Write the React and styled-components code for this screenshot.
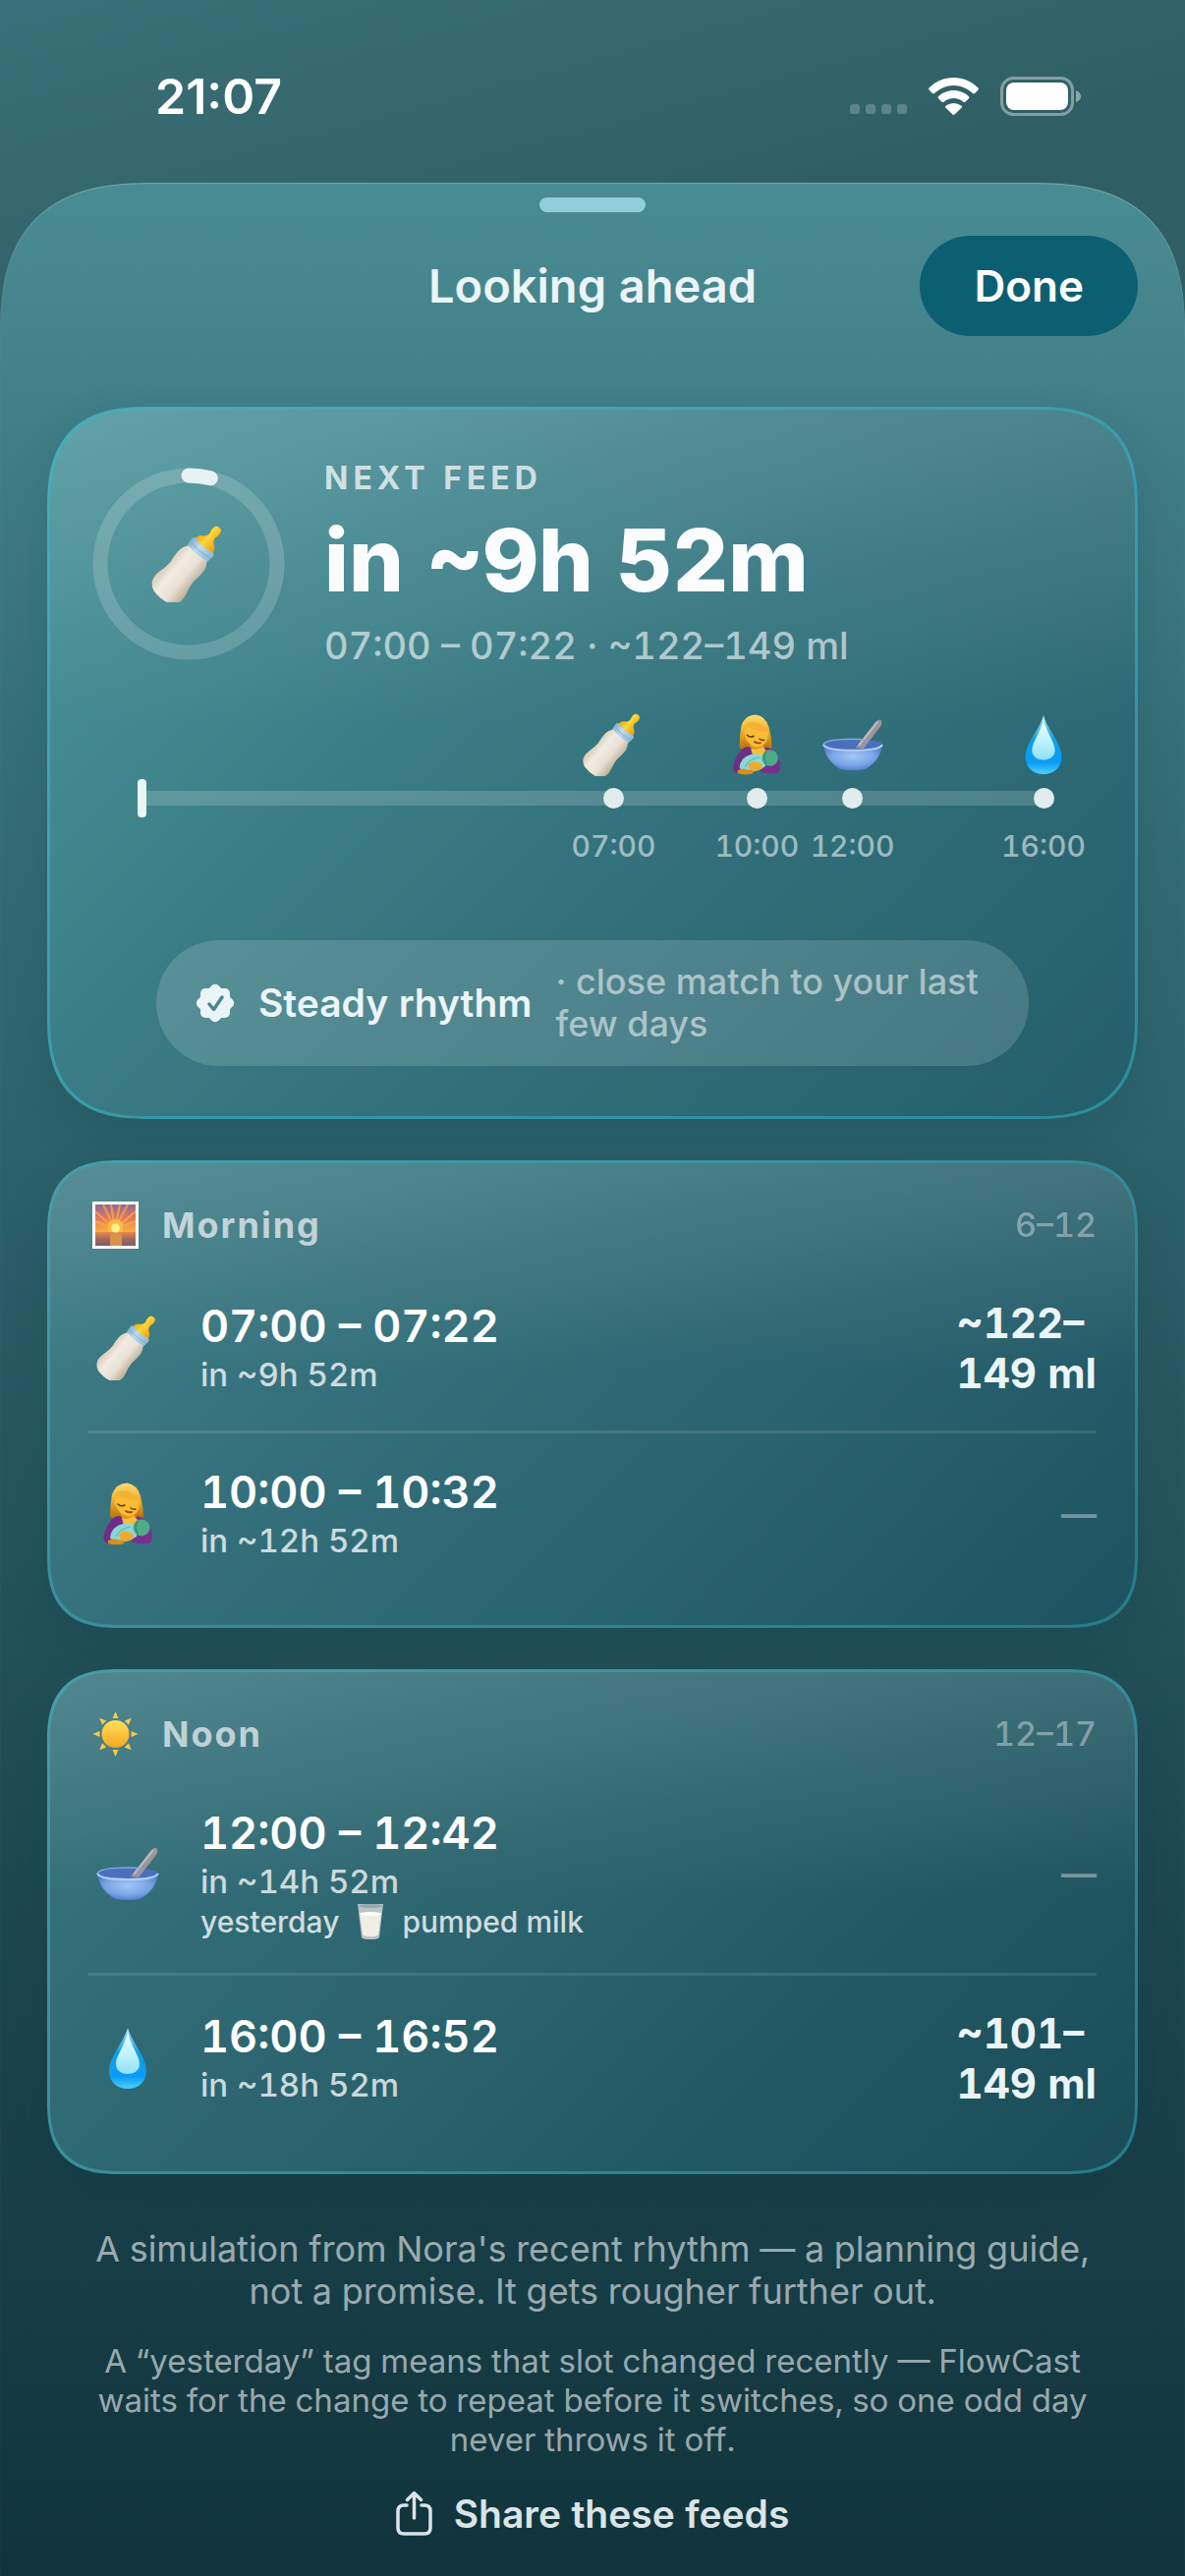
import React from "react";
import styled, { createGlobalStyle } from "styled-components";

const GlobalStyle = createGlobalStyle`
    * {
        box-sizing: border-box;
    }

    body {
        margin: 0;
        background: #11343c;
        color: #fff;
        font-family: Inter, "Liberation Sans", sans-serif;
        font-variant-numeric: tabular-nums;
    }

    h1, h2, p, ul {
        margin: 0;
        padding: 0;
    }

    svg {
        display: block;
        flex-shrink: 0;
    }
`

const Page = styled.div`
    min-height: 100vh;
    display: flex;
    flex-direction: column;
    background: linear-gradient(165deg, #3b7078 0, #2f5f65 400px);
`

const StatusBar = styled.div`
    height: 186px;
    padding: 10px 106px 0 158px;
    display: flex;
    align-items: center;
    justify-content: space-between;
`

const Clock = styled.time`
    font-size: 50px;
    line-height: 60px;
    font-weight: 600;
    font-variant-numeric: normal;
`

const StatusIcons = styled.div`
    display: flex;
    align-items: center;
    gap: 22px;
`

const Sheet = styled.main`
    flex: 1;
    border-radius: 126px 126px 0 0;
    padding: 15px 48px 24px;
    display: flex;
    flex-direction: column;
    background: linear-gradient(180deg, #498c93 0, #42808a 210px, #35707a 560px, #2d626b 960px, #225058 1490px, #183f48 2040px, #11343c 2436px);
    box-shadow: inset 0 1px 1px rgba(255, 255, 255, .25);

    @supports (corner-shape: squircle) {
        border-radius: 158px 158px 0 0;
        corner-shape: superellipse(1.4);
    }
`

const Grabber = styled.div`
    width: 108px;
    height: 15px;
    border-radius: 8px;
    background: #8fcfdb;
    align-self: center;
`

const Header = styled.header`
    margin-top: 24px;
    margin-bottom: 72px;
    display: grid;
    grid-template-columns: 1fr auto 1fr;
    align-items: center;
`

const Title = styled.h1`
    grid-column: 2;
    font-size: 47px;
    line-height: 60px;
    font-weight: 600;
    color: #ebf4f7;
`

const DoneButton = styled.button`
    justify-self: end;
    height: 102px;
    padding: 0 55px;
    border: 0;
    border-radius: 51px;
    background: #0c5f71;
    color: #fff;
    font: inherit;
    font-size: 44px;
    font-weight: 600;
`

const Hero = styled.section`
    border: 3px solid transparent;
    border-radius: 84px;
    padding: 50px 43px 51px;
    background:
        linear-gradient(180deg, rgba(255, 255, 255, .13) 0, rgba(255, 255, 255, 0) 45%) padding-box,
        linear-gradient(135deg, #4c959c 0, #35757f 50%, #235e6a 100%) padding-box,
        linear-gradient(150deg, #47aebb, #2b8c9a) border-box;
    box-shadow: 0 18px 48px rgba(6, 40, 50, .14);

    @supports (corner-shape: squircle) {
        border-radius: 105px;
        corner-shape: superellipse(1.4);
    }
`

const HeroTop = styled.div`
    display: flex;
    align-items: center;
    gap: 40px;
`

const RingBox = styled.div`
    display: grid;
    place-items: center;

    > svg {
        grid-area: 1 / 1;
    }
`

const HeroText = styled.div`
    display: flex;
    flex-direction: column;
    gap: 15px;
`

const Eyebrow = styled.h2`
    font-size: 32px;
    line-height: 40px;
    font-weight: 700;
    letter-spacing: 5px;
    text-transform: uppercase;
    color: rgba(255, 255, 255, .73);
`

const Countdown = styled.p`
    font-size: 88px;
    line-height: 96px;
    font-weight: 800;
    color: #fafcfd;
`

const HeroWindow = styled.p`
    font-size: 38px;
    line-height: 48px;
    font-weight: 500;
    color: rgba(255, 255, 255, .6);
`

const Timeline = styled.ul`
    position: relative;
    list-style: none;
    height: 156px;
    margin: 45px 50px 75px;
    display: flex;
    align-items: center;

    &::before {
        content: "";
        flex: 1;
        height: 15px;
        margin-top: 17px;
        background: rgba(255, 255, 255, .17);
    }
`

const NowTick = styled.li`
    position: absolute;
    left: -4px;
    top: 67px;
    width: 9px;
    height: 39px;
    border-radius: 4px;
    background: #ebf5f8;
`

const Stop = styled.li`
    position: absolute;
    top: 0;
    width: 100px;
    margin-left: -50px;
    display: flex;
    flex-direction: column;
    align-items: center;
`

const StopDot = styled.span`
    width: 21px;
    height: 21px;
    margin: 12px 0 20px;
    border-radius: 50%;
    background: #e1ecef;
`

const StopTime = styled.span`
    font-size: 30px;
    line-height: 36px;
    font-weight: 500;
    color: rgba(255, 255, 255, .55);
`

const RhythmPill = styled.div`
    margin: 0 65px;
    padding: 21px 40px;
    border-radius: 64px;
    background: rgba(255, 255, 255, .15);
    display: flex;
    align-items: center;
    gap: 24px;
`

const RhythmName = styled.strong`
    font-size: 39px;
    line-height: 48px;
    font-weight: 600;
    white-space: nowrap;
    color: #ebf5f8;
`

const RhythmNote = styled.span`
    font-size: 36px;
    line-height: 43px;
    font-weight: 500;
    color: rgba(255, 255, 255, .53);
`

const Card = styled.section`
    margin-top: 42px;
    border: 3px solid transparent;
    border-radius: 60px;
    padding: 39px 39px 31px;
    background:
        linear-gradient(180deg, rgba(255, 255, 255, .12) 0, rgba(255, 255, 255, 0) 45%) padding-box,
        linear-gradient(135deg, ${props => props.$from} 0, ${props => props.$to} 100%) padding-box,
        linear-gradient(150deg, #479eab, #257b8a) border-box;
    box-shadow: 0 18px 48px rgba(6, 40, 50, .14);

    @supports (corner-shape: squircle) {
        border-radius: 75px;
        corner-shape: superellipse(1.4);
    }
`

const CardHead = styled.div`
    height: 48px;
    margin-bottom: 17px;
    padding-left: 4px;
    display: flex;
    align-items: center;
    gap: 24px;
`

const CardTitle = styled.h2`
    flex: 1;
    font-size: 36px;
    line-height: 44px;
    font-weight: 700;
    letter-spacing: 2px;
    color: rgba(255, 255, 255, .67);
`

const CardHours = styled.span`
    font-size: 34px;
    line-height: 44px;
    font-weight: 500;
    color: rgba(255, 255, 255, .38);
`

const FeedList = styled.ul`
    list-style: none;
`

const Feed = styled.li`
    padding: 33px 0;
    display: flex;
    align-items: center;
    gap: 35px;

    & + & {
        border-top: 3px solid rgba(255, 255, 255, .11);
    }
`

const FeedIcon = styled.div`
    width: 79px;
    display: flex;
    justify-content: center;
`

const FeedBody = styled.div`
    flex: 1;
`

const FeedTime = styled.p`
    font-size: 45px;
    line-height: 54px;
    font-weight: 600;
`

const FeedIn = styled.p`
    font-size: 33px;
    line-height: 44px;
    font-weight: 500;
    color: rgba(255, 255, 255, .76);
`

const FeedTag = styled.p`
    display: flex;
    align-items: center;
    gap: 10px;
    font-size: 30px;
    line-height: 38px;
    font-weight: 500;
    color: rgba(255, 255, 255, .78);
`

const Amount = styled.p`
    width: min-content;
    font-size: 42px;
    line-height: 51px;
    font-weight: 700;
    color: #ebf4f6;
`

const NoAmount = styled(Amount)`
    font-size: 36px;
    font-weight: 600;
    color: rgba(255, 255, 255, .4);
`

const Footer = styled.footer`
    padding: 55px 40px 0;
    display: flex;
    flex-direction: column;
    align-items: center;
    text-align: center;
    color: rgba(255, 255, 255, .58);
`

const Disclaimer = styled.p`
    font-size: 36px;
    line-height: 43px;
`

const Footnote = styled.p`
    margin-top: 29px;
    font-size: 33px;
    line-height: 40px;
`

const ShareButton = styled.button`
    margin-top: 16px;
    height: 78px;
    padding: 0 24px;
    border: 0;
    background: none;
    color: #dbe4e6;
    font: inherit;
    font-size: 39px;
    font-weight: 600;
    display: flex;
    align-items: center;
    gap: 22px;
`

/* ---- pictograms ---- */

const Bottle = ({ size }) => (
    <svg width={size} height={size} viewBox="0 0 66 66" aria-hidden="true">
        <defs>
            <linearGradient id="milk" x1="0" y1="0" x2="1" y2="0">
                <stop offset="0" stopColor="#d8cbb8" />
                <stop offset=".3" stopColor="#f1ebe1" />
                <stop offset=".65" stopColor="#e9e1d4" />
                <stop offset="1" stopColor="#bdae98" />
            </linearGradient>
            <linearGradient id="teat" x1="0" y1="0" x2="1" y2="0">
                <stop offset="0" stopColor="#f0a30c" />
                <stop offset=".4" stopColor="#ffd63a" />
                <stop offset="1" stopColor="#e99a08" />
            </linearGradient>
            <linearGradient id="collar" x1="0" y1="0" x2="1" y2="0">
                <stop offset="0" stopColor="#7fb0d0" />
                <stop offset=".4" stopColor="#bcdcf0" />
                <stop offset="1" stopColor="#8bb8d4" />
            </linearGradient>
        </defs>
        <g transform="translate(33 33) rotate(40)">
            <path d="M-3-40Q0-42 3-40Q5-36 3-32Q3-28 7-26Q10-24 10-19H-10Q-10-24-7-26Q-3-28-3-32Q-5-36-3-40Z" fill="url(#teat)" />
            <path d="M-9-21Q0-18 9-21Q12-21 12-18L11-10H-11L-12-18Q-12-21-9-21Z" fill="url(#collar)" />
            <path d="M-11-16Q0-13 11-16" fill="none" stroke="#7eaccb" strokeWidth="1" opacity=".7" />
            <path d="M-10-12Q0-10 10-12Q14-8 14-2Q14 4 13 9Q13 14 15 21Q18 33 8 37Q0 39-8 37Q-18 33-15 21Q-13 14-13 9Q-14 4-14-2Q-14-8-10-12Z" fill="url(#milk)" />
        </g>
    </svg>
)

const Nursing = ({ size }) => (
    <svg width={size} height={size} viewBox="0 0 66 66" aria-hidden="true">
        <defs>
            <linearGradient id="hair" x1="0" y1="0" x2="0" y2="1">
                <stop offset="0" stopColor="#ffdb74" />
                <stop offset=".45" stopColor="#f4b02a" />
                <stop offset="1" stopColor="#b8700c" />
            </linearGradient>
        </defs>
        <path d="M15 36Q15 24 17 13Q21 2 32 1.500Q43 3 46 15Q49 26 49 36Q46 38 42 37H24Q19 39 15 36Z" fill="url(#hair)" />
        <path d="M26 32h14l1 9l-8 6l-8-6z" fill="#dc9a1c" />
        <path d="M20 36Q12 42 9 53Q7 61 13 63L30 61L33 50L27 36Q24 34 20 36Z" fill="#6f2d86" />
        <path d="M43 35Q54 38 57 50Q60 62 54 63Q46 64 38 62L33 50Z" fill="#77308f" />
        <path d="M27 37Q32 40 39 35L43 39L40 45L29 45Z" fill="#f7bd3c" />
        <path d="M20 18Q22 12 26 15Q34 19 45 18Q46 30 39 34Q33 37 27 33Q20 28 20 18Z" fill="#f9bd35" />
        <path d="M19 21Q19 11 27 9Q37 9 45 19Q33 20 23 14Q21 17 19 27Z" fill="#f2b235" />
        <path d="M23 23q3 3 7 1M36 27q3 2 5 1" fill="none" stroke="#5d3a0c" strokeWidth="1.500" strokeLinecap="round" />
        <path d="M31 30q3 2 6 1" fill="none" stroke="#a4481c" strokeWidth="2" strokeLinecap="round" />
        <path d="M15 57Q16 46 28 43Q38 42 43 46L42 56Q32 63 19 62Z" fill="#8ad8d3" />
        <path d="M21 56Q25 48 36 46" fill="none" stroke="#6bbdba" strokeWidth="1.500" />
        <circle cx="47" cy="47" r="8.500" fill="#4faa88" />
        <path d="M43 40q-4 6 0 13" fill="none" stroke="#3b8d70" strokeWidth="1.800" />
        <path d="M24 54q4-5 9-3l5 2q2 4-1 6q-6 3-11 0z" fill="#f0a92c" />
        <path d="M13 60q5-3 9-1l7 1q2 3-3 4q-8 1-13-1z" fill="#d98d1c" />
    </svg>
)

const Bowl = ({ size }) => (
    <svg width={size} height={size} viewBox="0 0 66 66" aria-hidden="true">
        <defs>
            <radialGradient id="bowl" cx=".5" cy=".45" r=".6">
                <stop offset="0" stopColor="#a3c6f6" />
                <stop offset=".6" stopColor="#7aa4e6" />
                <stop offset="1" stopColor="#4c74c4" />
            </radialGradient>
        </defs>
        <ellipse cx="33" cy="33" rx="31" ry="6" fill="#4a70bd" />
        <path d="M36 36L57 9q4-4 6-1q1 3-1 6L44 37z" fill="#9c959b" />
        <path d="M39 34L59 9" stroke="#c3bcbf" strokeWidth="2" />
        <path d="M2 33Q4 48 17 57Q20 60 33 60T49 57Q62 48 64 33Q60 39 33 39T2 33Z" fill="url(#bowl)" />
        <path d="M2 33Q5 39 33 39T64 33" fill="none" stroke="#b4d0f8" strokeWidth="2" />
        <path d="M2 33Q4 27 33 27Q41 27 48 28" fill="none" stroke="#83a8e6" strokeWidth="1.600" />
    </svg>
)

const Drop = ({ size }) => (
    <svg width={size} height={size} viewBox="0 0 66 66" aria-hidden="true">
        <defs>
            <linearGradient id="drop" x1="0" y1="0" x2="0" y2="1">
                <stop offset="0" stopColor="#a5e6fb" />
                <stop offset=".4" stopColor="#129fe4" />
                <stop offset=".8" stopColor="#0a9bf5" />
                <stop offset="1" stopColor="#4fd0fb" />
            </linearGradient>
            <linearGradient id="dropShine" x1="0" y1="0" x2="0" y2="1">
                <stop offset="0" stopColor="#f2fdff" />
                <stop offset=".6" stopColor="#b9f2fd" />
                <stop offset="1" stopColor="#8fdffb" />
            </linearGradient>
        </defs>
        <path d="M33 2C37 17 52 31 52 46C52 57 44 64 33 64S14 57 14 46C14 31 29 17 33 2Z" fill="url(#drop)" />
        <path d="M33 5C35 19 45 30 45 39C45 45 40 49 33 49S21 45 21 39C21 30 31 19 33 5Z" fill="url(#dropShine)" />
    </svg>
)

const Sunrise = () => (
    <svg width="47" height="48" viewBox="0 0 47 48" role="img" aria-label="Sunrise">
        <defs>
            <linearGradient id="sky" x1="0" y1="0" x2="0" y2="1">
                <stop offset="0" stopColor="#8d6c93" />
                <stop offset=".5" stopColor="#e5795a" />
                <stop offset="1" stopColor="#fdb43c" />
            </linearGradient>
            <linearGradient id="sea" x1="0" y1="0" x2="0" y2="1">
                <stop offset="0" stopColor="#e58a45" />
                <stop offset=".5" stopColor="#a4685f" />
                <stop offset="1" stopColor="#7f5b69" />
            </linearGradient>
        </defs>
        <path d="M0 0h47v48H0z" fill="#fff" />
        <path d="M3 3h41v29H3z" fill="url(#sky)" />
        <g stroke="#ffa94e" strokeWidth="2" opacity=".75">
            <path d="M23 28L3 20M23 28L3 10M23 28L11 3M23 28L19 3M23 28L28 3M23 28L36 3M23 28L44 10M23 28L44 20" />
        </g>
        <circle cx="23.500" cy="26" r="8" fill="#ffc93b" opacity=".7" />
        <path d="M3 31h41v14H3z" fill="url(#sea)" />
        <path d="M18 31h12v14H18z" fill="#d9924c" />
        <circle cx="23.500" cy="27" r="4.500" fill="#fff08a" />
    </svg>
)

const Sun = () => (
    <svg width="47" height="48" viewBox="0 0 47 48" role="img" aria-label="Sun">
        <defs>
            <linearGradient id="sun" x1="0" y1="0" x2="0" y2="1">
                <stop offset="0" stopColor="#ffe05a" />
                <stop offset="1" stopColor="#f6a51f" />
            </linearGradient>
        </defs>
        {[0, 45, 90, 135, 180, 225, 270, 315].map(deg => (
            <path key={deg} d="M23.500 1l3 7h-6z" fill="#fbc94a" transform={`rotate(${deg} 23.500 24)`} />
        ))}
        <circle cx="23.500" cy="24" r="14" fill="url(#sun)" />
    </svg>
)

const Glass = () => (
    <svg width="44" height="38" viewBox="0 0 44 38" role="img" aria-label="Glass of milk">
        <path d="M9 1h26l-4 34q-1 2-9 2t-9-2z" fill="#b9c3c4" />
        <path d="M11 10h22l-3 22q-1 2-8 2t-8-2z" fill="#f1eee6" />
        <ellipse cx="22" cy="3" rx="12" ry="2" fill="#93a9ac" />
        <ellipse cx="22" cy="11" rx="11" ry="2" fill="#fff" />
    </svg>
)

const icons = { bottle: Bottle, nursing: Nursing, bowl: Bowl, drop: Drop }

const Pictogram = ({ kind, size }) => {
    const Icon = icons[kind];
    return <Icon size={size} />
}

const SignalDots = () => (
    <svg width="58" height="40" viewBox="0 0 58 40" aria-hidden="true">
        {[0, 16, 32, 48].map(x => (
            <rect key={x} x={x} y="28" width="10" height="10" rx="3" fill="#fff" opacity=".22" />
        ))}
    </svg>
)

const Wifi = () => (
    <svg width="51" height="38" viewBox="0 0 51 38" aria-hidden="true" fill="#fff">
        <path d="M25.500 0C35 0 44 4 50.500 10.500q.8 1 0 2L47 16q-1 .8-2 0C39.500 11 33 8 25.500 8S11.500 11 6 16q-1 .8-2 0L.5 12.500q-.8-1 0-2C7 4 16 0 25.500 0Z" />
        <path d="M25.500 13C31.500 13 37 15.300 41 19.200q1 1 0 2L37.400 24.700q-1 .8-2 0Q31 21 25.500 21T15.600 24.700q-1 .8-2 0L10 21.200q-1-1 0-2C14 15.300 19.500 13 25.500 13Z" />
        <path d="M25.500 26q4.500 0 8 2.800q1 1 0 2L26.500 37.400q-1 .8-2 0L17.500 30.800q-1-1 0-2Q21 26 25.500 26Z" />
    </svg>
)

const Battery = () => (
    <svg width="82" height="40" viewBox="0 0 82 40" aria-hidden="true">
        <rect x="1.500" y="1.500" width="72" height="37" rx="12" fill="none" stroke="#fff" strokeWidth="3" opacity=".4" />
        <rect x="6" y="6" width="63" height="28" rx="8" fill="#fff" />
        <path d="M77 14q5 2 5 6t-5 6z" fill="#fff" opacity=".45" />
    </svg>
)

const Seal = () => (
    <svg width="40" height="40" viewBox="0 0 40 40" aria-hidden="true">
        <rect x="5" y="5" width="30" height="30" rx="5" fill="#ebf5f8" />
        <rect x="5" y="5" width="30" height="30" rx="5" fill="#ebf5f8" transform="rotate(45 20 20)" />
        <path d="M14 21l4.500 5.500L27 14" fill="none" stroke="#4c8690" strokeWidth="3.500" strokeLinecap="round" strokeLinejoin="round" />
    </svg>
)

const ShareIcon = () => (
    <svg width="37" height="46" viewBox="0 0 37 46" fill="none" stroke="currentColor" strokeWidth="3.500" strokeLinecap="round" strokeLinejoin="round" aria-hidden="true">
        <path d="M11 15H8q-6 0-6 6v17q0 6 6 6h21q6 0 6-6V21q0-6-6-6h-3" />
        <path d="M18.500 28V3M11.500 9.500l7-7l7 7" />
    </svg>
)

const Ring = ({ progress }) => {
    const length = 2 * Math.PI * 90;
    return (
        <svg width="196" height="196" viewBox="0 0 196 196" fill="none" strokeWidth="15" aria-hidden="true">
            <circle cx="98" cy="98" r="90" stroke="#fff" opacity=".17" />
            <circle cx="98" cy="98" r="90" stroke="#e8f1f3" strokeLinecap="round"
                strokeDasharray={`${length * progress} ${length}`}
                transform="rotate(-90 98 98)" />
        </svg>
    )
}

/* ---- data ---- */

const NOW = 21 * 60 + 7;
const SPAN = 18 * 60 + 53;

const stops = [
    { kind: "bottle", time: "07:00" },
    { kind: "nursing", time: "10:00" },
    { kind: "bowl", time: "12:00" },
    { kind: "drop", time: "16:00" },
]

// the space before "ml" is non-breaking, amounts only wrap after the dash
const sections = [
    {
        title: "Morning", hours: "6–12", icon: Sunrise, from: "#407f89", to: "#1d5361",
        feeds: [
            { kind: "bottle", time: "07:00 – 07:22", wait: "in ~9h 52m", amount: "~122–149\u00a0ml" },
            { kind: "nursing", time: "10:00 – 10:32", wait: "in ~12h 52m" },
        ],
    },
    {
        title: "Noon", hours: "12–17", icon: Sun, from: "#397680", to: "#194c58",
        feeds: [
            { kind: "bowl", time: "12:00 – 12:42", wait: "in ~14h 52m", yesterday: "pumped milk" },
            { kind: "drop", time: "16:00 – 16:52", wait: "in ~18h 52m", amount: "~101–149\u00a0ml" },
        ],
    },
]

const offsetOf = (time) => {
    const [h, m] = time.split(":").map(Number);
    return `${(h * 60 + m + 1440 - NOW) / SPAN * 100}%`
}

const FeedRow = ({ feed }) => (
    <Feed>
        <FeedIcon><Pictogram kind={feed.kind} size={66} /></FeedIcon>
        <FeedBody>
            <FeedTime>{feed.time}</FeedTime>
            <FeedIn>{feed.wait}</FeedIn>
            {feed.yesterday && <FeedTag>yesterday <Glass /> {feed.yesterday}</FeedTag>}
        </FeedBody>
        {feed.amount ? <Amount>{feed.amount}</Amount> : <NoAmount>—</NoAmount>}
    </Feed>
)

const App = () => (
    <Page>
        <GlobalStyle />
        <StatusBar>
            <Clock>21:07</Clock>
            <StatusIcons>
                <SignalDots />
                <Wifi />
                <Battery />
            </StatusIcons>
        </StatusBar>
        <Sheet>
            <Grabber />
            <Header>
                <Title>Looking ahead</Title>
                <DoneButton type="button">Done</DoneButton>
            </Header>
            <Hero>
                <HeroTop>
                    <RingBox>
                        <Ring progress={.04} />
                        <Bottle size={78} />
                    </RingBox>
                    <HeroText>
                        <Eyebrow>Next feed</Eyebrow>
                        <Countdown>in ~9h 52m</Countdown>
                        <HeroWindow>07:00 – 07:22 · ~122–149 ml</HeroWindow>
                    </HeroText>
                </HeroTop>
                <Timeline>
                    <NowTick />
                    {stops.map(stop => (
                        <Stop key={stop.time} style={{ left: offsetOf(stop.time) }}>
                            <Pictogram kind={stop.kind} size={64} />
                            <StopDot />
                            <StopTime>{stop.time}</StopTime>
                        </Stop>
                    ))}
                </Timeline>
                <RhythmPill>
                    <Seal />
                    <RhythmName>Steady rhythm</RhythmName>
                    <RhythmNote>· close match to your last few days</RhythmNote>
                </RhythmPill>
            </Hero>
            {sections.map(({ title, hours, icon: Icon, from, to, feeds }) => (
                <Card key={title} $from={from} $to={to}>
                    <CardHead>
                        <Icon />
                        <CardTitle>{title}</CardTitle>
                        <CardHours>{hours}</CardHours>
                    </CardHead>
                    <FeedList>
                        {feeds.map(feed => <FeedRow key={feed.time} feed={feed} />)}
                    </FeedList>
                </Card>
            ))}
            <Footer>
                <Disclaimer>
                    A simulation from Nora's recent rhythm — a planning guide, not a promise. It gets rougher further out.
                </Disclaimer>
                <Footnote>
                    A “yesterday” tag means that slot changed recently — FlowCast waits for the change to repeat before it switches, so one odd day never throws it off.
                </Footnote>
                <ShareButton type="button">
                    <ShareIcon />
                    Share these feeds
                </ShareButton>
            </Footer>
        </Sheet>
    </Page>
)

export default App;
